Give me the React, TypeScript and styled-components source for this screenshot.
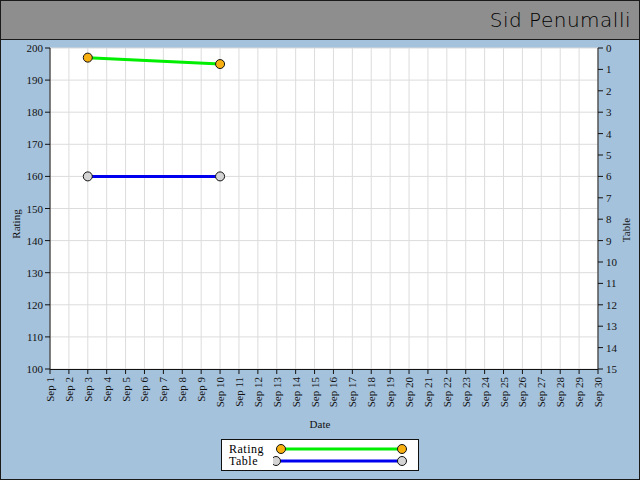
import React from "react";
import styled, { createGlobalStyle } from "styled-components";

const Global = createGlobalStyle`
  html, body { margin: 0; padding: 0; background: #fff; }
  * { box-sizing: border-box; }
`;

const Frame = styled.div`
  width: 640px; height: 480px; border: 1px solid #1a1a1a;
  background: #a5c2dc; display: flex; flex-direction: column;
`;
const Header = styled.div`
  height: 39px; background: #8e8e8e; border-bottom: 1px solid #1a1a1a;
  display: flex; align-items: center; justify-content: flex-end;
  padding: 0 8px 0 0;
  font-family: "DejaVu Sans", sans-serif; font-size: 20px; font-weight: 300;
  color: #000; letter-spacing: 0.5px;
`;
const Chart = styled.svg`
  display: block; width: 638px; height: 399px;
  font-family: "Liberation Serif", serif; font-size: 11px;
`;
const Legend = styled.div`
  align-self: flex-start; margin-left: 220px;
  width: 198px; height: 32px; background: #fff; border: 1px solid #111;
  display: flex; flex-direction: column; justify-content: center;
  padding-left: 7px;
  font-family: "Liberation Serif", serif; font-size: 12px; line-height: 12px;
`;
const Row = styled.div`display: flex; align-items: center; height: 12px;`;
const Label = styled.span`width: 44px; flex: none; letter-spacing: 0.5px;`;

const X0 = 50, X1 = 598, Y0 = 48, Y1 = 369;
const dx = (d: number) => X0 + ((d - 1) * (X1 - X0)) / 29;
const ry = (v: number) => Y1 - ((v - 100) * (Y1 - Y0)) / 100;
const ty = (v: number) => Y0 + (v * (Y1 - Y0)) / 15;

function LegendSample({ start, color, fill }: { start: number; color: string; fill: string }) {
  return (
    <svg width={140} height={12}>
      <line x1={start} y1={6} x2={129} y2={6} stroke={color} strokeWidth={3} />
      <circle cx={start} cy={6} r={4.5} fill={fill} stroke="#111" strokeWidth={1} />
      <circle cx={129} cy={6} r={4.5} fill={fill} stroke="#111" strokeWidth={1} />
    </svg>
  );
}

export default function App() {
  const days = Array.from({ length: 30 }, (_, i) => i + 1);
  const ratings = Array.from({ length: 11 }, (_, i) => 100 + i * 10);
  const tables = Array.from({ length: 16 }, (_, i) => i);
  return (
    <>
      <Global />
      <Frame>
        <Header>Sid Penumalli</Header>
        <Chart viewBox="1 40 638 399">
          <rect x={X0} y={Y0} width={X1 - X0} height={Y1 - Y0} fill="#fff" />
          {days.map((d) => (
            <line key={d} x1={dx(d)} x2={dx(d)} y1={Y0} y2={Y1} stroke="#dcdcdc" />
          ))}
          {ratings.map((r) => (
            <line key={r} x1={X0} x2={X1} y1={ry(r)} y2={ry(r)} stroke="#dcdcdc" />
          ))}
          <line x1={X0} x2={X0} y1={Y0} y2={Y1} stroke="#111" />
          <line x1={X1} x2={X1} y1={Y0} y2={Y1} stroke="#111" />
          <line x1={X0} x2={X1} y1={Y1 + 0.5} y2={Y1 + 0.5} stroke="#111" />
          {ratings.map((r) => (
            <g key={r}>
              <line x1={45} x2={X0} y1={ry(r)} y2={ry(r)} stroke="#111" />
              <text x={43} y={ry(r) + 4} textAnchor="end" fill="#111">{r}</text>
            </g>
          ))}
          {tables.map((t) => (
            <g key={t}>
              <line x1={X1} x2={603} y1={ty(t)} y2={ty(t)} stroke="#111" />
              <text x={606} y={ty(t) + 4} fill="#111">{t}</text>
            </g>
          ))}
          {days.map((d) => (
            <g key={d}>
              <line x1={dx(d)} x2={dx(d)} y1={Y1} y2={374} stroke="#111" />
              <text transform={`translate(${dx(d) + 4},377) rotate(-90)`} textAnchor="end" fill="#111">
                Sep {d}
              </text>
            </g>
          ))}
          <text x={320} y={428} textAnchor="middle" fill="#111">Date</text>
          <text transform="translate(20,224) rotate(-90)" textAnchor="middle" fill="#111">Rating</text>
          <text transform="translate(630,230) rotate(-90)" textAnchor="middle" fill="#111">Table</text>
          <line x1={dx(3)} y1={ry(197)} x2={dx(10)} y2={ry(195)} stroke="#00ee00" strokeWidth={3} />
          <circle cx={dx(3)} cy={ry(197)} r={4.5} fill="#f8b010" stroke="#111" />
          <circle cx={dx(10)} cy={ry(195)} r={4.5} fill="#f8b010" stroke="#111" />
          <line x1={dx(3)} y1={ry(160)} x2={dx(10)} y2={ry(160)} stroke="#0000ee" strokeWidth={3} />
          <circle cx={dx(3)} cy={ry(160)} r={4.5} fill="#d4d4d4" stroke="#111" />
          <circle cx={dx(10)} cy={ry(160)} r={4.5} fill="#d4d4d4" stroke="#111" />
        </Chart>
        <Legend>
          <Row>
            <Label>Rating</Label>
            <LegendSample start={8} color="#00ee00" fill="#f8b010" />
          </Row>
          <Row>
            <Label>Table</Label>
            <LegendSample start={3} color="#0000ee" fill="#d4d4d4" />
          </Row>
        </Legend>
      </Frame>
    </>
  );
}
